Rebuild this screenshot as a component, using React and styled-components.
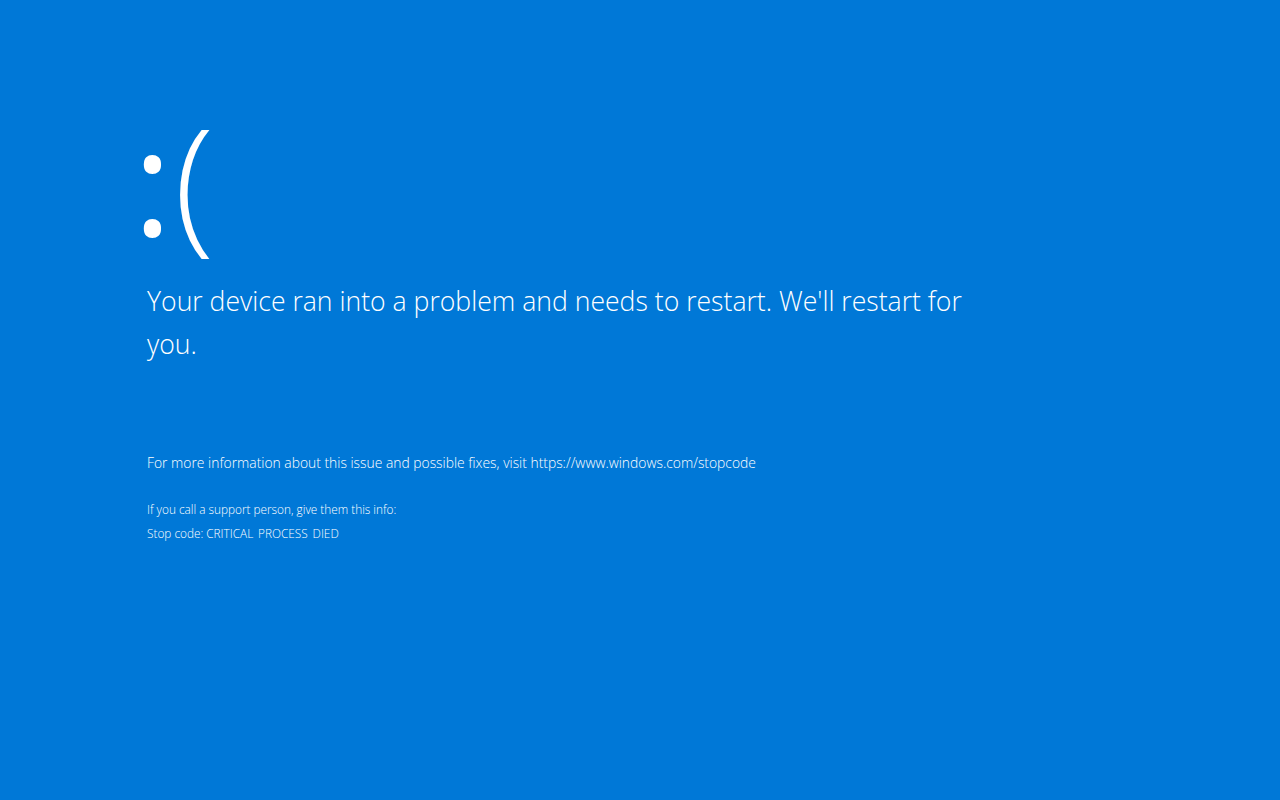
import React from "react";
import styled, { createGlobalStyle } from "styled-components";

const Global = createGlobalStyle`
  html, body { margin: 0; padding: 0; background: #0078d7; }
  body { font-family: "Open Sans", "Noto Sans", sans-serif; }
`;

const Screen = styled.main`
  width: 1280px;
  height: 800px;
  background: #0078d7;
  color: #ffffff;
  box-sizing: border-box;
  padding: 99px 0 0 147px;
  display: flex;
  flex-direction: column;
  font-weight: 300;
`;

const Face = styled.div`
  font-size: 148px;
  line-height: 160px;
  height: 160px;
  margin-left: -14px;
  font-weight: 300;
`;

const Eyes = styled.span`
  font-weight: 400;
  letter-spacing: 2px;
`;

const Message = styled.p`
  margin: 21px 0 0;
  width: 830px;
  font-size: 26.6px;
  line-height: 43px;
`;

const Info = styled.p`
  margin: 0;
  font-size: 13.86px;
  line-height: 20px;
  margin-top: ${(p) => p.$top}px;
`;

const Small = styled.p`
  margin: 0;
  font-size: 11.8px;
  line-height: 14px;
  height: 14px;
  margin-top: ${(p) => p.$top}px;
`;

const Hidden = styled.span`
  color: transparent;
`;

export default function App() {
  return (
    <>
      <Global />
      <Screen>
        <Face>
          <Eyes>:</Eyes>(
        </Face>
        <Message>
          Your device ran into a problem and needs to restart. We'll restart for
          you.
        </Message>
        <Info $top={87}>
          For more information about this issue and possible fixes, visit
          https://www.windows.com/stopcode
        </Info>
        <Small $top={29}>If you call a support person, give them this info:</Small>
        <Small $top={10}>
          Stop code: CRITICAL<Hidden>_</Hidden>PROCESS<Hidden>_</Hidden>DIED
        </Small>
      </Screen>
    </>
  );
}
